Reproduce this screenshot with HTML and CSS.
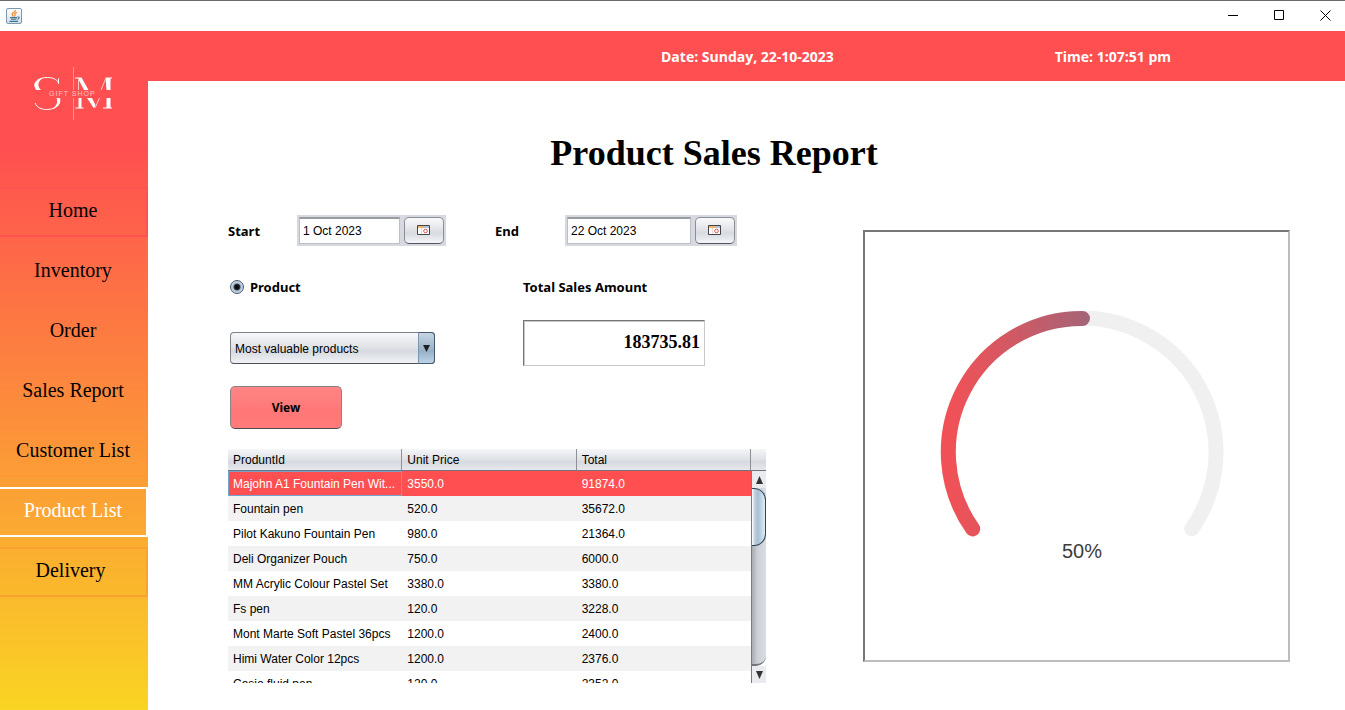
FILE: index.html
```html
<!DOCTYPE html>
<html lang="en">
<head>
<meta charset="utf-8">
<title>Product Sales Report</title>
<link rel="stylesheet" href="styles.css">
</head>
<body>
<div class="window">
  <div class="titlebar">
    <svg class="app-icon" width="16" height="16" viewBox="0 0 16 16" aria-hidden="true">
      <defs><linearGradient id="ji" x1="0" y1="0" x2="0" y2="1"><stop offset="0" stop-color="#fff"/><stop offset="1" stop-color="#d3dde6"/></linearGradient></defs>
      <rect x=".5" y=".5" width="15" height="15" rx="1.5" fill="url(#ji)" stroke="#7d97ab"/>
      <path d="M9.500 2C10 4 6 4.500 6.200 6.200c.1.9.9 1.300.9 2.300" fill="none" stroke="#ee8a2c" stroke-width="1.300"/>
      <path d="M10.800 4.400C8.600 5.200 8.300 6 9 7c.3.600 0 1-.5 1.500" fill="none" stroke="#ee8a2c" stroke-width="1.200"/>
      <path d="M4 9.600h7M5 11.300h5.500M11.500 9c2.200-.5 2 1.800 0 2.200M3.500 13.400h8.500" fill="none" stroke="#3e7294" stroke-width="1.100"/>
    </svg>
    <div class="window-controls">
      <button aria-label="Minimize"><svg width="11" height="11" viewBox="0 0 11 11"><path d="M0 5.500h10"/></svg></button>
      <button aria-label="Maximize"><svg width="11" height="11" viewBox="0 0 11 11"><path d="M.5.5h9v9h-9z"/></svg></button>
      <button aria-label="Close"><svg width="11" height="11" viewBox="0 0 11 11"><path d="M.5.5l10 10M10.500.5l-10 10"/></svg></button>
    </div>
  </div>
  <div class="app">
    <aside class="sidebar">
      <div class="logo">
        <svg width="80" height="54" viewBox="0 0 80 54" aria-label="SM Gift Shop">
          <path d="M24.500 17V11.500M24.500 16C23 12 18 10.500 13.500 10.500 6 10.500 1 13.500 1 18c0 2 .7 3.500 2 5" fill="none" stroke="#fff"/>
          <path d="M9 11C3 12.500.5 15 .5 18.300c0 1.800.8 3.300 2 4.700h4.500C4 20 2.500 15 9 11z" fill="#fff"/>
          <path d="M22.500 31h3.500c1.500 5-2 9.500-8 10.800 5-3 6-7 4.500-10.800z" fill="#fff"/>
          <path d="M1 36c2 4.500 6.500 6.500 11.500 6.500 7 0 12.500-3 13.300-8" fill="none" stroke="#fff"/>
          <path d="M41 10.500h6.500L54.500 23h-4.500L44 11.500H41zM53 31h5l3.500 7-1.500 3.500z" fill="#fff"/>
          <path d="M71.500 10.500h6.500v1h-1.500V23h-4zM72.500 31h4v9.500H78v1h-9v-1h3.500z" fill="#fff"/>
          <path d="M44.500 31h3v9.500h2v1h-8v-1h3z" fill="#fff"/>
          <path d="M71.500 12L67 23M65.500 31l-4.500 10M44.500 13v10" fill="none" stroke="#ffc9ca"/>
          <path d="M39.500 0v23M39.500 31v22" stroke="#ff9394" fill="none"/>
          <text x="15" y="29" class="logo-text">GIFT SHOP</text>
        </svg>
      </div>
      <nav class="menu">
        <a class="menu-item item-home" href="#">Home</a>
        <a class="menu-item" href="#">Inventory</a>
        <a class="menu-item" href="#">Order</a>
        <a class="menu-item" href="#">Sales Report</a>
        <a class="menu-item" href="#">Customer List</a>
        <a class="menu-item active" href="#">Product List</a>
        <a class="menu-item item-delivery" href="#">Delivery&nbsp;</a>
      </nav>
    </aside>
    <header class="topbar">
      <span class="date">Date: Sunday, 22-10-2023</span>
      <span class="time">Time: 1:07:51 pm</span>
    </header>
    <main class="main">
      <h1>Product Sales Report</h1>
      <div class="content">
        <section class="report">
          <div class="dates">
            <label for="start">Start</label>
            <div class="date-field">
              <input id="start" type="text" value="1 Oct 2023">
              <button aria-label="Pick start date"><svg width="13" height="10" viewBox="0 0 13 10"><path d="M.5.5h12v9H.5z" fill="#fff" stroke="#444"/><path d="M1 2h6" stroke="#f2b66a" stroke-width="2"/><path d="M7 2h5" stroke="#b4bfdc" stroke-width="2"/><path d="M4.500 3v6" stroke="#ddd"/><circle cx="8.500" cy="6" r="1.800" fill="#fff" stroke="#e05050"/></svg></button>
            </div>
            <label class="end-label" for="end">End</label>
            <div class="date-field">
              <input id="end" type="text" value="22 Oct 2023">
              <button aria-label="Pick end date"><svg width="13" height="10" viewBox="0 0 13 10"><path d="M.5.5h12v9H.5z" fill="#fff" stroke="#444"/><path d="M1 2h6" stroke="#f2b66a" stroke-width="2"/><path d="M7 2h5" stroke="#b4bfdc" stroke-width="2"/><path d="M4.500 3v6" stroke="#ddd"/><circle cx="8.500" cy="6" r="1.800" fill="#fff" stroke="#e05050"/></svg></button>
            </div>
          </div>
          <div class="filters">
            <div class="filter-col">
              <label class="radio"><input type="radio" name="scope" checked>Product</label>
              <div class="combo">
                <select aria-label="Ranking"><option>Most valuable products</option></select>
                <span class="combo-arrow"><svg width="7" height="7" viewBox="0 0 7 7"><path d="M0 0h7L3.500 7z" fill="#1d2126"/></svg></span>
              </div>
              <button class="view">View</button>
            </div>
            <div class="amount-col">
              <label for="total">Total Sales Amount</label>
              <input id="total" class="amount" type="text" value="183735.81">
            </div>
          </div>
          <div class="table-box">
            <div class="table-view">
              <table>
                <thead><tr><th>ProduntId</th><th>Unit Price</th><th>Total</th></tr></thead>
                <tbody>
                  <tr class="selected"><td>Majohn A1 Fountain Pen Wit...</td><td>3550.0</td><td>91874.0</td></tr>
                  <tr><td>Fountain pen</td><td>520.0</td><td>35672.0</td></tr>
                  <tr><td>Pilot Kakuno Fountain Pen</td><td>980.0</td><td>21364.0</td></tr>
                  <tr><td>Deli Organizer Pouch</td><td>750.0</td><td>6000.0</td></tr>
                  <tr><td>MM Acrylic Colour Pastel Set</td><td>3380.0</td><td>3380.0</td></tr>
                  <tr><td>Fs pen</td><td>120.0</td><td>3228.0</td></tr>
                  <tr><td>Mont Marte Soft Pastel 36pcs</td><td>1200.0</td><td>2400.0</td></tr>
                  <tr><td>Himi Water Color 12pcs</td><td>1200.0</td><td>2376.0</td></tr>
                  <tr><td>Casio fluid pen</td><td>120.0</td><td>2352.0</td></tr>
                </tbody>
              </table>
            </div>
            <div class="scroll-col">
              <div class="head-cap"></div>
              <div class="scrollbar">
                <button aria-label="Scroll up"><svg width="7" height="8" viewBox="0 0 7 8"><path d="M0 8h7L3.500 0z" fill="#333"/></svg></button>
                <div class="track"><div class="thumb"></div></div>
                <button aria-label="Scroll down"><svg width="7" height="8" viewBox="0 0 7 8"><path d="M0 0h7L3.500 8z" fill="#333"/></svg></button>
              </div>
            </div>
          </div>
        </section>
        <section class="gauge">
          <svg width="284" height="228" viewBox="0 0 284 228" aria-hidden="true">
            <defs><linearGradient id="arc" gradientUnits="userSpaceOnUse" x1="8" y1="0" x2="149" y2="0"><stop offset="0" stop-color="#f15156"/><stop offset=".25" stop-color="#e1555d"/><stop offset="1" stop-color="#a46478"/></linearGradient></defs>
            <path d="M32.200 218.900A134 134 0 1 1 251.800 218.900" fill="none" stroke="#f0f0f0" stroke-width="15" stroke-linecap="round"/>
            <path d="M32.700 218.900A133.500 133.500 0 0 1 142.500 8.500" fill="none" stroke="url(#arc)" stroke-width="15" stroke-linecap="round"/>
          </svg>
          <div class="gauge-value">50%</div>
        </section>
      </div>
    </main>
  </div>
</div>
</body>
</html>
```
FILE: styles.css
```css
* { box-sizing: border-box; }
body {
  margin: 0;
  background: #fff;
  color: #000;
  font: 12px/16px "Liberation Sans", Arial, sans-serif;
}
button, input, select { font: inherit; color: inherit; margin: 0; }
svg { display: block; }

.window { display: flex; flex-direction: column; height: 100vh; overflow: hidden; }
.titlebar {
  flex: none;
  height: 31px;
  display: flex;
  align-items: center;
  justify-content: space-between;
  padding-left: 6px;
  border-top: 1px solid #6b6b6b;
}
.window-controls { display: flex; }
.window-controls button {
  width: 46px;
  height: 30px;
  padding: 0 0 2px 21px;
  border: 0;
  background: none;
}
.window-controls path { fill: none; stroke: #000; }

.app {
  flex: 1;
  min-height: 0;
  display: grid;
  grid-template-columns: 148px 1fr;
  grid-template-rows: 50px 1fr;
}
.sidebar {
  grid-row: 1 / 3;
  background: linear-gradient(#ff4f51 17%, #f9d423);
}
.logo { height: 156px; padding: 36px 0 0 34px; }
.logo-text { font: 7px "Liberation Sans", Arial, sans-serif; fill: #ffc4c4; letter-spacing: 1px; }
.menu { display: flex; flex-direction: column; gap: 10px; }
.menu-item {
  height: 50px;
  display: flex;
  align-items: center;
  justify-content: center;
  padding-bottom: 5px;
  border: 2px solid rgba(255, 120, 60, .12);
  border-left: 0;
  color: #000;
  text-decoration: none;
  font: 20px/24px "Liberation Serif", "Times New Roman", serif;
}
.menu-item.item-home { border-color: #ff5152; border-top-color: #ff5350; }
.menu-item.item-delivery { border-color: #f8a22f; }
.menu-item.active { border-color: #fff; color: #fff; }

.topbar {
  display: flex;
  align-items: center;
  padding: 2px 174px 0 513px;
  justify-content: space-between;
  background: #ff4f51;
  color: #fff;
  font: bold 14px/18px "Open Sans", "Noto Sans", sans-serif;
}

.main { padding: 50px 55px 0 80px; }
h1 {
  margin: 0;
  padding-right: 90px;
  text-align: center;
  font: bold 36px/44px "Liberation Serif", "Times New Roman", serif;
}
.content {
  display: grid;
  grid-template-columns: 538fr 427fr;
  gap: 97px;
  align-items: start;
  margin-top: 40px;
}
label { font: bold 13px/16px "Noto Sans", "Open Sans", sans-serif; }

.dates {
  display: grid;
  grid-template-columns: 69px 149px 49px 70px 172px;
  align-items: center;
}
.end-label { grid-column: 4; }
.date-field { display: flex; gap: 4px; padding: 2px; background: #d6d9df; }
.date-field input {
  flex: 1;
  min-width: 0;
  height: 27px;
  padding: 0 3px;
  border: 1px solid #bcbfc4;
  border-top: 2px solid #9a9ca1;
  background: #fff;
}
.date-field button {
  width: 40px;
  height: 27px;
  display: flex;
  align-items: center;
  justify-content: center;
  padding: 0 1px 2px 0;
  border: 1px solid #8a8e96;
  border-bottom-color: #50545c;
  border-radius: 5px;
  background: linear-gradient(#fafafb, #e2e4e9 45%, #d7dae0 60%, #f4f5f8);
}

.filters { display: grid; grid-template-columns: 293px 182px; margin: 33px 0 0 2px; }
.filter-col { display: flex; flex-direction: column; align-items: flex-start; }
.radio { display: flex; align-items: center; gap: 6px; }
.radio input {
  appearance: none;
  width: 14px;
  height: 14px;
  border: 1px solid #4a5a6c;
  border-radius: 50%;
  background: radial-gradient(circle, #0b0d10 0 2px, #39434e 3px, #b4c6d8 4px, #dfe9f2);
}
.combo { position: relative; width: 205px; margin-top: 37px; }
.combo select {
  display: block;
  appearance: none;
  width: 100%;
  height: 32px;
  padding: 1px 20px 0 4px;
  border: 1px solid #7c8087;
  border-bottom-color: #4c5058;
  border-radius: 4px;
  background: linear-gradient(#f7f8fa, #e1e3e8 45%, #d6d9df 60%, #f0f2f6);
}
.combo-arrow {
  position: absolute;
  top: 0;
  right: 0;
  width: 17px;
  height: 32px;
  display: flex;
  align-items: center;
  justify-content: center;
  border: 1px solid #45586c;
  border-left-color: #7d95ac;
  border-radius: 0 4px 4px 0;
  background: linear-gradient(#c6d5e2, #a0b6ca 50%, #98b0c6 60%, #bcd3e8);
  pointer-events: none;
}
.view {
  width: 112px;
  height: 43px;
  margin-top: 22px;
  padding: 0;
  border: 1px solid #8a8285;
  border-bottom-color: #4c4c52;
  border-radius: 5px;
  background: linear-gradient(#ff8585, #ff7777 60%, #ff7a7a);
  font: bold 12px/16px "Noto Sans", "Open Sans", sans-serif;
}
.amount-col { display: flex; flex-direction: column; gap: 25px; }
.amount {
  height: 46px;
  width: 100%;
  padding: 0 4px 2px;
  border: 1px solid #c8c8c8;
  border-top-color: #767676;
  border-left-color: #767676;
  box-shadow: inset 1px 1px #c8c8c8;
  text-align: right;
  font: bold 18px/20px "Liberation Serif", "Times New Roman", serif;
}

.table-box { display: flex; height: 234px; margin-top: 20px; }
.table-view { flex: 1; min-width: 0; overflow: hidden; }
table { width: 100%; table-layout: fixed; border-collapse: separate; border-spacing: 0; }
th, td { padding: 0 5px; text-align: left; font-weight: normal; white-space: nowrap; }
th, .head-cap {
  height: 22px;
  border-bottom: 1px solid #70747c;
  background: linear-gradient(#f5f6f8, #dfe1e6 50%, #d6d9df 60%, #e6e8ed);
}
th { border-right: 1px solid #8d9096; }
td { height: 25px; }
tbody tr:nth-child(even) { background: #f2f2f2; }
tbody tr.selected { background: #ff4f51; color: #fff; }
.selected td:first-child { padding: 0 4px; border: 1px solid #73a4d1; }

.scroll-col { width: 15px; display: flex; flex-direction: column; }
.scrollbar { flex: 1; display: flex; flex-direction: column; border-left: 1px solid #777b82; }
.scrollbar button {
  height: 17px;
  display: flex;
  align-items: center;
  justify-content: center;
  padding: 0;
  border: 0;
  background: #e9ebef;
}
.track {
  flex: 1;
  background: linear-gradient(90deg, #a9acb3, #cdd0d6 40%, #d9dce2);
  border-radius: 0 0 10px 0;
  border-bottom: 2px solid #70747c;
}
.thumb {
  height: 58px;
  border: solid #2f4458;
  border-width: 1px 1px 1px 0;
  border-radius: 0 12px 12px 0;
  background: linear-gradient(90deg, #fff, #c3d2e0 20%, #a8bed2 45%, #dceefa);
}

.gauge {
  height: 432px;
  margin-top: 15px;
  display: flex;
  flex-direction: column;
  align-items: center;
  padding: 78px 0 0 11px;
  border: 2px solid #767676;
  border-right-color: #bdbdbd;
  border-bottom-color: #bdbdbd;
}
.gauge-value { margin-top: 1px; font: 20px/24px "Liberation Sans", Arial, sans-serif; color: #3c3c3c; }
```
